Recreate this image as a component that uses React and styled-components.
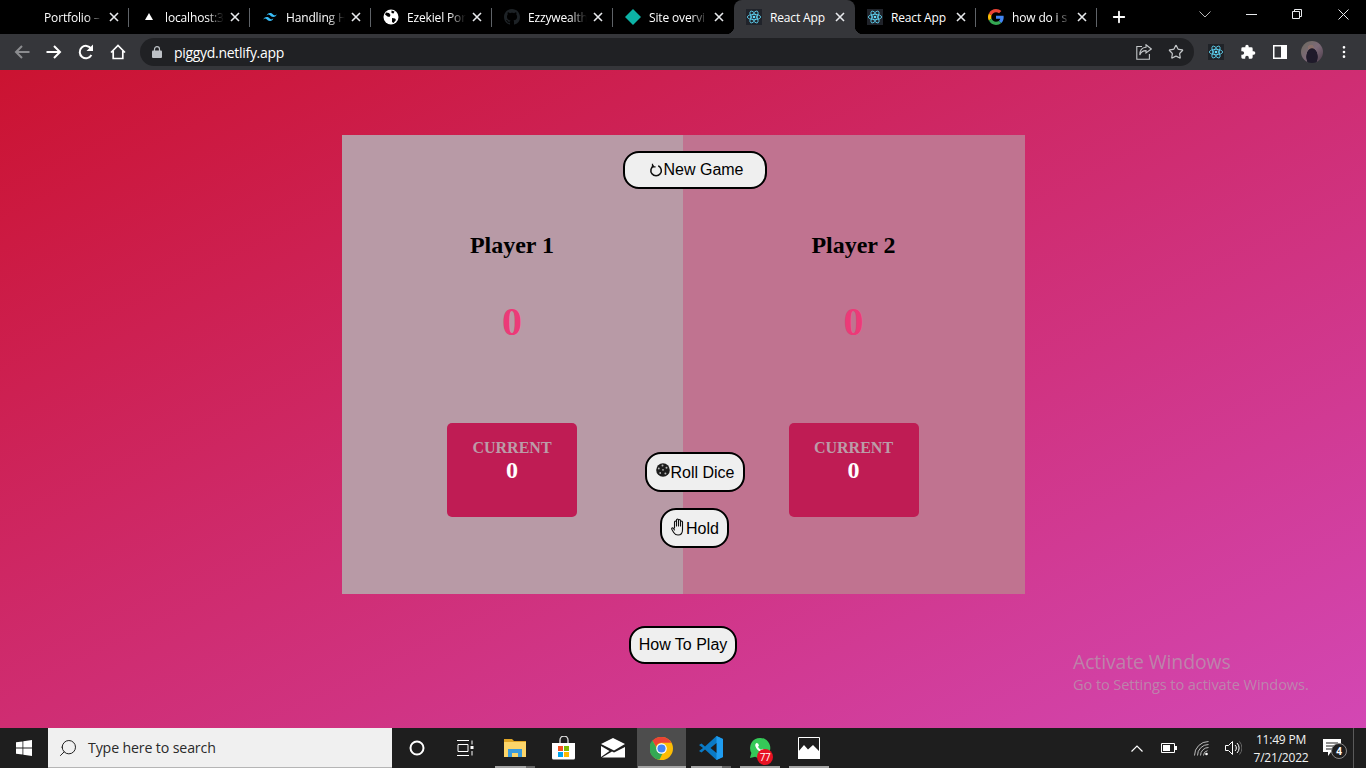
import React from "react";
import styled, { createGlobalStyle, css } from "styled-components";
import { Plus, MoreVertical, Search, Star } from "lucide-react";

const Global = createGlobalStyle`
  html, body { margin: 0; padding: 0; height: 100%; overflow: hidden; }
  #root { height: 100%; }
  * { box-sizing: border-box; }
`;

const Screen = styled.div`
  height: 768px; width: 1366px; display: flex; flex-direction: column;
  font-family: "Liberation Serif", serif; position: relative; overflow: hidden;
`;

/* browser chrome */
const TabStrip = styled.div`
  height: 34px; background: #000; display: flex; align-items: stretch; padding-left: 8px; flex: none;
`;
const TabItem = styled.div`
  width: 121px; position: relative; display: flex; align-items: center; padding-left: 12px;
  color: #fff; font: 12px "Open Sans", sans-serif; letter-spacing: -0.15px;
  ${p => p.$sep && css`
    &::after { content: ""; position: absolute; right: 0; top: 8px; height: 19px; width: 1px; background: #5f6368; }
  `}
  ${p => p.$active && css`
    background: #35363a; border-radius: 8px 8px 0 0;
    &::before, &::after {
      content: ""; position: absolute; bottom: 0; width: 8px; height: 8px;
    }
    &::before { left: -8px; background: radial-gradient(circle at 0 0, #000 8px, #35363a 8.5px); }
    &::after { right: -8px; top: auto; background: radial-gradient(circle at 100% 0, #000 8px, #35363a 8.5px); }
  `}
`;
const Favicon = styled.span`
  width: 16px; height: 16px; display: flex; align-items: center; justify-content: center; flex: none;
`;
const TabTitle = styled.span`
  width: 60px; margin-left: 8px; white-space: nowrap; flex: none;
  ${p => p.$fade && css`
    -webkit-mask-image: linear-gradient(to right, #000 70%, transparent 98%);
    mask-image: linear-gradient(to right, #000 70%, transparent 98%);
  `}
`;
const TabClose = styled.span`
  width: 12px; height: 12px; margin-left: 4px; display: flex; align-items: center; justify-content: center;
`;
const NewTab = styled.div`
  width: 44px; display: flex; align-items: center; justify-content: center; color: #fff;
`;
const Caption = styled.div`
  margin-left: auto; display: flex;
`;
const CaptionBtn = styled.div`
  width: 46px; height: 28px; display: flex; align-items: center; justify-content: center;
`;
const Toolbar = styled.div`
  height: 36px; background: #35363a; display: flex; align-items: center; padding: 0 6px; flex: none;
`;
const NavBtn = styled.div`
  width: 32px; height: 28px; display: flex; align-items: center; justify-content: center; color: #fff; flex: none;
`;
const Omnibox = styled.div`
  flex: 1; height: 28px; margin: 0 6px; border-radius: 14px; background: #202124;
  display: flex; align-items: center; padding-left: 12px; color: #fff;
  font: 14px "Open Sans", sans-serif; letter-spacing: -0.3px;
`;
const Url = styled.span`
  margin-left: 12px;
`;
const OmniRight = styled.div`
  margin-left: auto; display: flex; align-items: center; gap: 8px; padding-right: 6px;
`;
const OmniIcon = styled.span`
  width: 24px; display: flex; justify-content: center; color: #c4c7c9;
`;
const Avatar = styled.span`
  width: 22px; height: 22px; border-radius: 50%;
  background:
    radial-gradient(ellipse 6px 9px at 50% 72%, #1f1a2a 90%, transparent 100%),
    radial-gradient(circle 3px at 45% 30%, #8a6f6a 90%, transparent 100%),
    linear-gradient(135deg, #6b6a5c, #7d6a78 50%, #4a3a48);
`;

/* page */
const Page = styled.main`
  flex: 1; display: flex; flex-direction: column; align-items: center; padding-top: 65px;
  background: linear-gradient(to bottom right, #cb1331, #d347b4);
`;
const Board = styled.section`
  width: 683px; height: 459px; display: grid; grid-template-columns: 341px 342px; position: relative;
`;
const PlayerPanel = styled.div`
  background: ${p => p.$bg}; display: flex; flex-direction: column; align-items: center; padding-top: 96px;
`;
const PlayerName = styled.h2`
  margin: 0; font: bold 24px/28px "Liberation Serif", serif; color: #000;
`;
const Score = styled.div`
  margin-top: 40px; font: bold 40px/46px "Liberation Serif", serif; color: #ec3a78;
`;
const CurrentCard = styled.div`
  margin-top: 78px; width: 130px; height: 94px; background: #bf1c54; border-radius: 5px;
  display: flex; flex-direction: column; align-items: center; padding-top: 15px;
`;
const CurrentLabel = styled.div`
  font: bold 16px/19px "Liberation Serif", serif; color: #bb9ca8;
`;
const CurrentValue = styled.div`
  font: bold 24px/27px "Liberation Serif", serif; color: #fff;
`;
const GameButton = styled.button`
  display: flex; align-items: center; justify-content: center; height: ${p => p.$h}px; width: ${p => p.$w}px;
  background: #efefef; color: #000; border: 2px solid #000; border-radius: 16px;
  font: 16px "Liberation Sans", sans-serif; padding: 0;
`;
const FloatingButton = styled(GameButton)`
  position: absolute; top: ${p => p.$top}px; left: ${p => p.$left}px;
  padding: ${p => p.$pt || 0}px 0 0 ${p => p.$pl || 2}px;
`;
const HowTo = styled(GameButton)`
  margin-top: 32px;
`;
const BtnIcon = styled.span`
  display: flex; margin-top: ${p => p.$mt || 0}px;
`;

/* taskbar */
const Taskbar = styled.footer`
  height: 40px; background: #1e1e1e; display: flex; align-items: stretch; flex: none; color: #fff;
`;
const StartBtn = styled.div`
  width: 48px; display: flex; align-items: center; justify-content: center;
`;
const SearchBox = styled.div`
  width: 344px; background: #f0f0f0; border-bottom: 1px solid #b5b5b5; display: flex; align-items: center;
  padding-left: 10px; color: #2a2a2a; font: 14.2px "Open Sans", sans-serif; letter-spacing: -0.15px;
`;
const SearchText = styled.span`
  margin-left: 10px;
`;
const TaskBtn = styled.div`
  width: 49px; display: flex; align-items: center; justify-content: center; position: relative;
  ${p => p.$active && css`background: #4d4d4d;`}
  ${p => p.$open && css`
    &::after { content: ""; position: absolute; left: ${p.$active ? 1 : 5}px; right: ${p.$active ? 0 : 4}px; bottom: 0; height: 2px;
      background: ${p.$stack ? "linear-gradient(to right, #a5a5a5 78%, #666 78%)" : "#a5a5a5"}; }
  `}
`;
const Badge = styled.span`
  position: absolute; right: 11px; bottom: 3px; width: 16px; height: 16px; border-radius: 50%; background: #e81123;
  color: #fff; font: 10px/16px "Open Sans", sans-serif; text-align: center; letter-spacing: -0.5px;
`;
const Tray = styled.div`
  margin-left: auto; display: flex; align-items: stretch;
`;
const TrayBtn = styled.div`
  width: 32px; display: flex; align-items: center; justify-content: center; color: #fff;
`;
const Clock = styled.div`
  width: 64px; display: flex; flex-direction: column; align-items: center; justify-content: center; padding-top: 2px;
  font: 12px/18px "Open Sans", sans-serif; letter-spacing: -0.2px; color: #f2f2f2; white-space: nowrap;
`;
const NotifBtn = styled.div`
  width: 40px; display: flex; align-items: center; justify-content: center; position: relative;
`;
const NotifCount = styled.span`
  position: absolute; left: 18px; top: 15px; width: 16px; height: 16px; border-radius: 50%;
  background: #1e1e1e; border: 1px solid #8a8a8a; color: #fff; font: bold 10px/14px "Open Sans", sans-serif; text-align: center;
`;
const ShowDesktop = styled.div`
  width: 13px; border-left: 1px solid #5a5a5a;
`;
const Watermark = styled.div`
  position: absolute; left: 1073px; top: 649px; color: rgba(175,175,175,0.62); font-family: "Open Sans", sans-serif; pointer-events: none;
`;
const WmTitle = styled.div`
  font-size: 19.4px; line-height: 25px; letter-spacing: -0.1px;
`;
const WmSub = styled.div`
  font-size: 14.6px; line-height: 20px; letter-spacing: -0.1px;
`;

/* drawings */
const ReactIcon = ({ size = 16, bg = "#20232a" }) => (
  <svg width={size} height={size} viewBox="0 0 24 24">
    <rect width="24" height="24" fill={bg} />
    <g fill="none" stroke="#61dafb" strokeWidth="1.2">
      <ellipse cx="12" cy="12" rx="10" ry="4" />
      <ellipse cx="12" cy="12" rx="10" ry="4" transform="rotate(60 12 12)" />
      <ellipse cx="12" cy="12" rx="10" ry="4" transform="rotate(120 12 12)" />
    </g>
    <circle cx="12" cy="12" r="2" fill="#61dafb" />
  </svg>
);
const Tailwind = () => (
  <svg width="16" height="16" viewBox="0 0 24 24" fill="#38bdf8">
    <path d="M12 6c-2.700 0-4.300 1.300-5 4 1-1.300 2.200-1.800 3.500-1.500.8.200 1.300.700 1.900 1.400 1 1 2.100 2.100 4.600 2.100 2.700 0 4.300-1.300 5-4-1 1.300-2.200 1.800-3.500 1.500-.8-.200-1.300-.700-1.900-1.400C15.600 7.100 14.500 6 12 6zM7 12c-2.700 0-4.300 1.300-5 4 1-1.300 2.200-1.800 3.500-1.500.8.200 1.300.700 1.900 1.400 1 1 2.100 2.100 4.600 2.100 2.700 0 4.300-1.300 5-4-1 1.300-2.200 1.800-3.500 1.500-.8-.200-1.300-.700-1.900-1.400C10.600 13.100 9.500 12 7 12z" />
  </svg>
);
const Globe = () => (
  <svg width="16" height="16" viewBox="0 0 16 16">
    <circle cx="8" cy="8" r="7.500" fill="#fff" />
    <path d="M3 3.500l3 .5 1.500 2-1 2-2-.5-2.500-2zM9 9l3 .5 1 1.500-2.500 3L9 13zM8.500 1.500l3 1-1 2-2-.5z" fill="#000" />
  </svg>
);
const Triangle = () => (
  <svg width="16" height="16" viewBox="0 0 16 16"><path d="M8 4l4 7H4z" fill="#fff" /></svg>
);
const Github = () => (
  <svg width="16" height="16" viewBox="0 0 16 16" fill="#1d2226">
    <path d="M8 0C3.580 0 0 3.580 0 8c0 3.540 2.290 6.530 5.470 7.590.4.070.55-.17.55-.38 0-.19-.010-.82-.010-1.490-2.010.37-2.530-.49-2.690-.94-.090-.23-.48-.94-.82-1.130-.28-.15-.68-.52-.010-.53.63-.010 1.080.58 1.230.82.72 1.210 1.870.87 2.330.66.070-.52.280-.87.510-1.070-1.780-.2-3.640-.89-3.640-3.950 0-.87.310-1.590.82-2.150-.080-.2-.36-1.020.080-2.120 0 0 .67-.21 2.200.82.64-.18 1.320-.27 2-.27s1.360.09 2 .27c1.530-1.040 2.200-.82 2.200-.82.44 1.100.16 1.920.080 2.120.51.56.82 1.270.82 2.150 0 3.070-1.870 3.750-3.650 3.950.29.250.54.730.54 1.480 0 1.070-.010 1.930-.010 2.200 0 .21.150.46.550.38A8.010 8.010 0 0 0 16 8c0-4.420-3.580-8-8-8z" />
  </svg>
);
const Diamond = () => (
  <svg width="16" height="16" viewBox="0 0 16 16"><path d="M8 0l8 8-8 8-8-8z" fill="#0cb3a6" /></svg>
);
const GoogleG = () => (
  <svg width="16" height="16" viewBox="0 0 48 48">
    <path fill="#EA4335" d="M24 9.500c3.500 0 6.700 1.200 9.200 3.600l6.900-6.900C35.900 2.400 30.500 0 24 0 14.600 0 6.500 5.400 2.600 13.200l8 6.200C12.500 13.700 17.800 9.500 24 9.500z" />
    <path fill="#4285F4" d="M47 24.500c0-1.600-.1-3.100-.4-4.500H24v9h12.900c-.6 3-2.200 5.500-4.700 7.200l7.700 6C44.400 37.900 47 31.800 47 24.500z" />
    <path fill="#FBBC05" d="M10.600 28.600a14.400 14.400 0 0 1 0-9.200l-8-6.200a24 24 0 0 0 0 21.600z" />
    <path fill="#34A853" d="M24 48c6.500 0 11.900-2.100 15.900-5.800l-7.700-6c-2.200 1.400-4.900 2.300-8.200 2.300-6.200 0-11.500-4.200-13.400-9.900l-8 6.200C6.500 42.600 14.600 48 24 48z" />
  </svg>
);
const TabX = () => (
  <svg width="10" height="10" viewBox="0 0 10 10" stroke="#e8eaed" strokeWidth="1.600"><path d="M1 1l8 8M9 1l-8 8" /></svg>
);
const CapChevron = () => (
  <svg width="12" height="7" viewBox="0 0 12 7" fill="none" stroke="#b8b8b8"><path d="M.5.500L6 6l5.500-5.500" /></svg>
);
const CapMin = () => (
  <svg width="11" height="1" viewBox="0 0 11 1"><rect width="11" height="1" fill="#e8eaed" /></svg>
);
const CapClose = () => (
  <svg width="11" height="11" viewBox="0 0 11 11" stroke="#e8eaed"><path d="M.5.500l10 10M10.500.500l-10 10" /></svg>
);
const RestoreIcon = () => (
  <svg width="10" height="10" viewBox="0 0 10 10" fill="none" stroke="#e8eaed"><path d="M.5 2.500h7v7h-7zM2.500 2.500v-2h7v7h-2" /></svg>
);
const BackArrow = ({ color }) => (
  <svg width="16" height="14" viewBox="0 0 16 14" fill="none" stroke={color} strokeWidth="2"><path d="M15.500 7H2M8 1L2 7l6 6" /></svg>
);
const ForwardArrow = () => (
  <svg width="16" height="14" viewBox="0 0 16 14" fill="none" stroke="#fff" strokeWidth="2"><path d="M.5 7H14M8 1l6 6-6 6" /></svg>
);
const Reload = () => (
  <svg width="16" height="16" viewBox="0 0 16 16" fill="none">
    <path d="M13.400 11a6.200 6.200 0 1 1-.3-6.400" stroke="#fff" strokeWidth="2" />
    <path d="M15 .5v6.500H8.500z" fill="#fff" />
  </svg>
);
const HomeIcon = () => (
  <svg width="16" height="16" viewBox="0 0 16 16" fill="none" stroke="#fff" strokeWidth="1.700"><path d="M1 8.500L8 1.500l7 7M3.200 7v7.500h9.600V7" /></svg>
);
const LockSolid = () => (
  <svg width="10" height="12" viewBox="0 0 10 12">
    <path d="M2.500 5V3.200a2.500 2.500 0 0 1 5 0V5" fill="none" stroke="#bdc1c6" strokeWidth="1.200" />
    <rect y="4.500" width="10" height="7.500" rx="1" fill="#bdc1c6" />
  </svg>
);
const ShareIcon = () => (
  <svg width="16" height="16" viewBox="0 0 16 16" fill="none" stroke="#c4c7c9" strokeWidth="1.100">
    <path d="M6 2.500H.8v12.700h12.600V10" />
    <path d="M10 .8l5.300 4.200L10 9V6.600C7 6.600 4.800 8 3.800 11c0-4.500 2.300-7.400 6.200-7.700z" />
  </svg>
);
const SidePanel = () => (
  <svg width="14" height="14" viewBox="0 0 14 14"><path fill="#fff" fillRule="evenodd" d="M0 0h14v14H0zM1.500 1.500v11H8v-11z" /></svg>
);
const PuzzleSolid = () => (
  <svg width="16" height="16" viewBox="0 0 24 24" fill="#fff">
    <path d="M20.500 11H19V7a2 2 0 0 0-2-2h-4V3.500a2.500 2.500 0 0 0-5 0V5H4a2 2 0 0 0-2 2v3.800h1.500a2.700 2.700 0 0 1 0 5.400H2V20a2 2 0 0 0 2 2h3.800v-1.500a2.700 2.700 0 0 1 5.400 0V22H17a2 2 0 0 0 2-2v-4h1.500a2.500 2.500 0 0 0 0-5z" />
  </svg>
);
const ResetIcon = () => (
  <svg width="14" height="14" viewBox="0 0 16 16" fill="none" stroke="#111" strokeWidth="1.800">
    <path d="M5.600 3.200a6 6 0 1 0 5 0" />
    <path d="M4 .8v3.500h3.500" strokeWidth="1.400" />
  </svg>
);
const DiceIcon = () => (
  <svg width="14" height="14" viewBox="0 0 14 14">
    <circle cx="7" cy="7" r="6.800" fill="#1c1c1c" />
    <g fill="#b5b5b5">
      <circle cx="6.500" cy="2.600" r="1" /><circle cx="2.800" cy="5.500" r=".9" /><circle cx="10.500" cy="4.800" r="1" />
      <circle cx="4.200" cy="10" r=".9" /><circle cx="9.400" cy="10.500" r="1" /><circle cx="7" cy="6.800" r=".9" />
    </g>
  </svg>
);
const HandUp = () => (
  <svg width="15" height="18" viewBox="0 0 15 18" fill="none" stroke="#111" strokeWidth="1.100" strokeLinecap="round" strokeLinejoin="round">
    <path d="M3.500 10V4a1 1 0 0 1 2 0v4M5.500 8V2a1 1 0 0 1 2 0v6M7.500 8V2.500a1 1 0 0 1 2 0V8M9.500 8V4a1 1 0 0 1 2 0v8c0 3-1.800 5-4.500 5-2 0-3.300-.8-4.300-2.500L.8 11.200c-.5-1 .8-1.800 1.500-1L3.500 12" />
  </svg>
);
const WinLogo = () => (
  <svg width="16" height="16" viewBox="0 0 16 16" fill="#fff">
    <path d="M0 2.300l6.500-.9v6.200H0zM7.300 1.300L16 0v7.600H7.300zM0 8.400h6.500v6.200L0 13.700zM7.300 8.400H16V16l-8.700-1.200z" />
  </svg>
);
const TaskView = () => (
  <svg width="17" height="16" viewBox="0 0 17 16" fill="none" stroke="#fff">
    <path d="M0 .5h12M0 15.500h12M1 4.500h10v7H1z" />
    <path d="M15 .5v4M15 11v4.500" />
    <rect x="13.500" y="6" width="3" height="3" fill="#fff" stroke="none" />
  </svg>
);
const Explorer = () => (
  <svg width="22" height="20" viewBox="0 0 22 20">
    <path d="M0 1h8l2 2h12v3H0z" fill="#e0a526" />
    <rect y="4" width="22" height="15" fill="#fcd569" />
    <path d="M4 11h14v8h-4v-4H8v4H4z" fill="#3a9bdc" />
  </svg>
);
const Store = () => (
  <svg width="24" height="24" viewBox="0 0 24 24">
    <path d="M8 7V4a4 4 0 0 1 8 0v3" fill="none" stroke="#ddd" strokeWidth="1.300" />
    <path d="M0 7h23v15a1.500 1.500 0 0 1-1.500 1.500h-20A1.500 1.500 0 0 1 0 22z" fill="#fff" />
    <rect x="6" y="10" width="5" height="5" fill="#f25022" /><rect x="12" y="10" width="5" height="5" fill="#7fba00" />
    <rect x="6" y="16" width="5" height="5" fill="#00a4ef" /><rect x="12" y="16" width="5" height="5" fill="#ffb900" />
  </svg>
);
const Mail = () => (
  <svg width="24" height="20" viewBox="0 0 24 20">
    <path d="M0 6L12 0l12 6-11 6.500z" fill="#fff" />
    <path d="M0 8l8.500 5L0 19zM24 9v10.500H1l10-6 2 1z" fill="#fff" />
  </svg>
);
const Chrome = () => (
  <svg width="23" height="23" viewBox="0 0 48 48">
    <circle cx="24" cy="24" r="24" fill="#fbbc05" />
    <path d="M24 0a24 24 0 0 1 20.800 12H24a12 12 0 0 0-11.400 8.300L5 7.500A24 24 0 0 1 24 0z" fill="#ea4335" />
    <path d="M5 7.500l9.600 16.600a10 10 0 0 0 11.800 9.700L19.600 47.600A24 24 0 0 1 5 7.500z" fill="#34a853" />
    <circle cx="24" cy="24" r="11" fill="#fff" /><circle cx="24" cy="24" r="8.500" fill="#4285f4" />
  </svg>
);
const VsCode = () => (
  <svg width="24" height="24" viewBox="0 0 24 24">
    <path d="M17.500 0L24 3v18l-6.500 3L6 13.500l-3.500 3L0 15l4-3-4-3 2.500-1.500 3.500 3z" fill="#0a7ac6" />
    <path d="M17.500 0L24 3v18l-6.500 3z" fill="#1f9cf0" />
    <path d="M17.500 7l-6 5 6 5z" fill="#1e1e1e" />
  </svg>
);
const Whatsapp = () => (
  <svg width="22" height="22" viewBox="0 0 24 24">
    <path d="M12 1a11 11 0 0 0-9.400 16.500L1 23l5.700-1.500A11 11 0 1 0 12 1z" fill="#35c958" />
    <path d="M8 6.500c-1 .8-1.500 2-1 3.500 1 3 3.500 5.500 6.500 6.500 1.500.4 2.800-.1 3.500-1.200l-.3-1.500-2.400-1.100-1.100 1.100c-1.500-.6-2.700-1.800-3.300-3.300l1-1.100-1-2.400z" fill="#fff" />
  </svg>
);
const Photos = () => (
  <svg width="22" height="22" viewBox="0 0 22 22">
    <path d="M.5.500h21v21H.5z" fill="none" stroke="#fff" />
    <path d="M0 15l6-7 4 4.500L15 8l7 7v7H0z" fill="#fff" />
  </svg>
);
const TrayChevron = () => (
  <svg width="12" height="7" viewBox="0 0 12 7" fill="none" stroke="#fff" strokeWidth="1.200"><path d="M.5 6.500L6 1l5.500 5.500" /></svg>
);
const Battery = () => (
  <svg width="16" height="10" viewBox="0 0 16 10">
    <path d="M.5.500h13v9H.5z" fill="none" stroke="#fff" /><rect x="2" y="2" width="7" height="6" fill="#fff" /><rect x="14" y="3" width="2" height="4" fill="#fff" />
  </svg>
);
const Wifi = () => (
  <svg width="15" height="15" viewBox="0 0 15 15" fill="none" stroke="#bbb">
    <path d="M.5 14.500a14 14 0 0 1 14-14M3.500 14.500a11 11 0 0 1 11-11M6.500 14.500a8 8 0 0 1 8-8M9.500 14.500a5 5 0 0 1 4-4.800" />
    <circle cx="12.500" cy="13" r="1.300" fill="#fff" stroke="none" />
  </svg>
);
const Speaker = () => (
  <svg width="17" height="16" viewBox="0 0 17 16" fill="none" stroke="#fff">
    <path d="M.5 5.500h3l4-4v13l-4-4h-3z" /><path d="M10 5a4 4 0 0 1 0 6M12 3a7 7 0 0 1 0 10" />
    <path d="M14.500 1.500a10 10 0 0 1 0 13" stroke="#666" />
  </svg>
);
const NotifBubble = () => (
  <svg width="20" height="20" viewBox="0 0 20 20">
    <path fillRule="evenodd" d="M0 1h18v13H8l-3 4v-4H0zM3 4.500v1h12v-1zM3 7.500v1h12v-1zM3 10.500v1h9v-1z" fill="#fff" />
  </svg>
);

const tabs = [
  { title: "Portfolio –", icon: null, fade: true, sep: true },
  { title: "localhost:3", icon: <Triangle />, fade: true, sep: true },
  { title: "Handling H", icon: <Tailwind />, fade: true, sep: true },
  { title: "Ezekiel Por", icon: <Globe />, fade: true, sep: true },
  { title: "Ezzywealth", icon: <Github />, fade: true, sep: true },
  { title: "Site overvi", icon: <Diamond />, fade: true },
  { title: "React App", icon: <ReactIcon />, active: true },
  { title: "React App", icon: <ReactIcon />, sep: true },
  { title: "how do i s", icon: <GoogleG />, fade: true, sep: true },
];

const players = [
  { name: "Player 1", bg: "#b89aa6" },
  { name: "Player 2", bg: "#c07390" },
];

export default function App() {
  return (
    <Screen>
      <Global />
      <TabStrip>
        {tabs.map((t, i) => (
          <TabItem key={i} $active={t.active} $sep={t.sep}>
            <Favicon>{t.icon}</Favicon>
            <TabTitle $fade={t.fade}>{t.title}</TabTitle>
            <TabClose><TabX /></TabClose>
          </TabItem>
        ))}
        <NewTab><Plus size={18} strokeWidth={2.4} /></NewTab>
        <Caption>
          <CaptionBtn><CapChevron /></CaptionBtn>
          <CaptionBtn><CapMin /></CaptionBtn>
          <CaptionBtn><RestoreIcon /></CaptionBtn>
          <CaptionBtn><CapClose /></CaptionBtn>
        </Caption>
      </TabStrip>
      <Toolbar>
        <NavBtn><BackArrow color="#8b8c8f" /></NavBtn>
        <NavBtn><ForwardArrow /></NavBtn>
        <NavBtn><Reload /></NavBtn>
        <NavBtn><HomeIcon /></NavBtn>
        <Omnibox>
          <LockSolid />
          <Url>piggyd.netlify.app</Url>
          <OmniRight>
            <OmniIcon><ShareIcon /></OmniIcon>
            <OmniIcon><Star size={16} strokeWidth={1.8} /></OmniIcon>
          </OmniRight>
        </Omnibox>
        <NavBtn><ReactIcon size={16} bg="#202328" /></NavBtn>
        <NavBtn><PuzzleSolid /></NavBtn>
        <NavBtn><SidePanel /></NavBtn>
        <NavBtn><Avatar /></NavBtn>
        <NavBtn><MoreVertical size={16} strokeWidth={2} /></NavBtn>
      </Toolbar>

      <Page>
        <Board>
          {players.map(p => (
            <PlayerPanel key={p.name} $bg={p.bg}>
              <PlayerName>{p.name}</PlayerName>
              <Score>0</Score>
              <CurrentCard>
                <CurrentLabel>CURRENT</CurrentLabel>
                <CurrentValue>0</CurrentValue>
              </CurrentCard>
            </PlayerPanel>
          ))}
          <FloatingButton $top={16} $left={281} $w={144} $h={38} $pl={4}>
            <BtnIcon><ResetIcon /></BtnIcon>New Game
          </FloatingButton>
          <FloatingButton $top={317} $left={303} $w={100} $h={40} $pt={2}>
            <BtnIcon $mt={-6}><DiceIcon /></BtnIcon>Roll Dice
          </FloatingButton>
          <FloatingButton $top={373} $left={318} $w={69} $h={40} $pt={2}>
            <BtnIcon $mt={-4}><HandUp /></BtnIcon>Hold
          </FloatingButton>
        </Board>
        <HowTo $w={108} $h={38}>How To Play</HowTo>
      </Page>

      <Taskbar>
        <StartBtn><WinLogo /></StartBtn>
        <SearchBox>
          <Search size={20} strokeWidth={1.2} color="#222" style={{ transform: "scaleX(-1)" }} />
          <SearchText>Type here to search</SearchText>
        </SearchBox>
        <TaskBtn><svg width="16" height="16" viewBox="0 0 16 16"><circle cx="8" cy="8" r="6.500" fill="none" stroke="#fff" strokeWidth="2" /></svg></TaskBtn>
        <TaskBtn><TaskView /></TaskBtn>
        <TaskBtn $open $stack><Explorer /></TaskBtn>
        <TaskBtn><Store /></TaskBtn>
        <TaskBtn><Mail /></TaskBtn>
        <TaskBtn $active $open><Chrome /></TaskBtn>
        <TaskBtn $open $stack><VsCode /></TaskBtn>
        <TaskBtn $open><Whatsapp /><Badge>77</Badge></TaskBtn>
        <TaskBtn $open><Photos /></TaskBtn>
        <Tray>
          <TrayBtn><TrayChevron /></TrayBtn>
          <TrayBtn><Battery /></TrayBtn>
          <TrayBtn><Wifi /></TrayBtn>
          <TrayBtn><Speaker /></TrayBtn>
          <Clock><span>11:49 PM</span><span>7/21/2022</span></Clock>
          <NotifBtn><NotifBubble /><NotifCount>4</NotifCount></NotifBtn>
          <ShowDesktop />
        </Tray>
      </Taskbar>

      <Watermark>
        <WmTitle>Activate Windows</WmTitle>
        <WmSub>Go to Settings to activate Windows.</WmSub>
      </Watermark>
    </Screen>
  );
}
